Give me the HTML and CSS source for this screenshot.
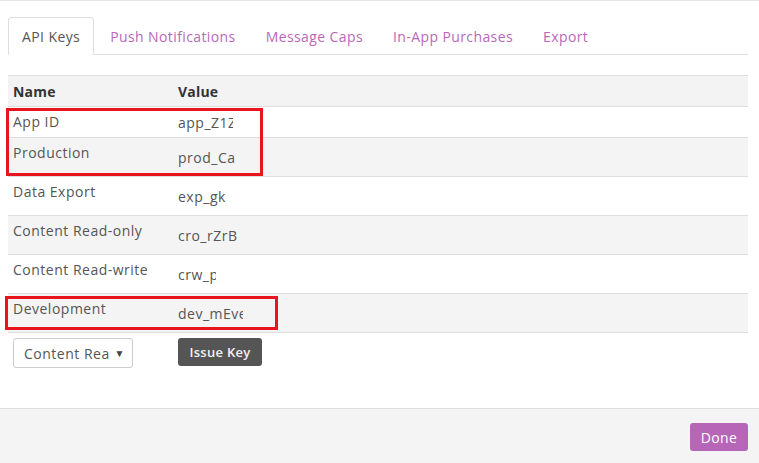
FILE: index.html
```html
<!DOCTYPE html>
<html>
<head>
<meta charset="utf-8">
<link rel="stylesheet" href="styles.css">
</head>
<body>
<div class="page">
  <div class="main">
    <ul class="tabs">
      <li class="tab active">API Keys</li>
      <li class="tab">Push Notifications</li>
      <li class="tab">Message Caps</li>
      <li class="tab">In-App Purchases</li>
      <li class="tab">Export</li>
    </ul>
    <table class="keys">
      <thead>
        <tr><th class="c-name">Name</th><th class="c-val">Value</th></tr>
      </thead>
      <tbody>
        <tr class="short"><td class="c-name">App ID</td><td class="c-val"><span class="val" style="width:55px">app_Z1Z</span></td></tr>
        <tr class="alt"><td class="c-name">Production</td><td class="c-val"><span class="val" style="width:61px">prod_Ca</span></td></tr>
        <tr><td class="c-name">Data Export</td><td class="c-val"><span class="val" style="width:51px">exp_gk</span></td></tr>
        <tr class="alt"><td class="c-name">Content Read-only</td><td class="c-val"><span class="val" style="width:63px">cro_rZrB</span></td></tr>
        <tr><td class="c-name">Content Read-write</td><td class="c-val"><span class="val" style="width:38px">crw_pq</span></td></tr>
        <tr class="alt"><td class="c-name">Development</td><td class="c-val"><span class="val" style="width:65px">dev_mEvex</span></td></tr>
      </tbody>
    </table>
    <div class="controls">
      <div class="select"><span class="select-text">Content Read-only</span><span class="arrow">&#9660;</span></div>
      <button class="issue">Issue Key</button>
    </div>
  </div>
  <div class="footer">
    <button class="done">Done</button>
  </div>
  <div class="mark mark1"></div>
  <div class="mark mark2"></div>
</div>
</body>
</html>
```

FILE: styles.css
```css
* { box-sizing: border-box; }
html, body { margin: 0; padding: 0; background: #fff; }
body {
  font-family: "Open Sans", "Liberation Sans", sans-serif;
  font-size: 14px;
  letter-spacing: 0.5px;
  color: #555;
}
.page {
  position: relative;
  width: 759px;
  height: 463px;
  border-top: 1px solid #e6e6e6;
  display: flex;
  flex-direction: column;
}
.main {
  flex: 1;
  padding: 16px 11px 0 8px;
}
.tabs {
  list-style: none;
  margin: 0;
  padding: 0;
  display: flex;
  border-bottom: 1px solid #ddd;
  height: 38px;
}
.tab {
  height: 38px;
  line-height: 20px;
  padding: 9px 13px 8px;
  margin-right: 2px;
  letter-spacing: 0.4px;
  color: #b968b9;
  border: 1px solid transparent;
  border-radius: 4px 4px 0 0;
}
.tab.active {
  color: #555;
  border-color: #ddd;
  border-bottom-color: #fff;
  background: #fff;
}
.keys {
  margin-top: 20px;
  width: 100%;
  border-collapse: collapse;
  table-layout: fixed;
}
.keys th, .keys td {
  padding: 0 5px;
  text-align: left;
  border-bottom: 1px solid #ddd;
}
.keys .c-name { width: 165px; }
.keys thead th {
  border-top: 1px solid #ddd;
  background: #f3f3f3;
  height: 31px;
  font-weight: 700;
  letter-spacing: 0.2px;
  color: #333;
  vertical-align: middle;
}
.keys tbody td { height: 39px; }
.keys tbody tr.short td { height: 31px; }
.keys tbody tr.alt td { background: #f4f4f4; }
.keys td.c-name {
  vertical-align: top;
  padding-top: 5px;
  line-height: 20px;
}
.keys td.c-val { vertical-align: middle; padding-top: 0; }
.val {
  display: inline-block;
  overflow: hidden;
  white-space: nowrap;
  vertical-align: middle;
  line-height: 20px;
}
.controls {
  display: flex;
  align-items: flex-start;
  gap: 45px;
  padding: 5px 0 0 5px;
}
.select {
  width: 120px;
  height: 30px;
  border: 1px solid #ccc;
  border-radius: 3px;
  display: flex;
  align-items: center;
  padding: 0 7px 0 10px;
  background: #fff;
}
.select-text {
  width: 86px;
  overflow: hidden;
  white-space: nowrap;
  color: #555;
}
.arrow {
  margin-left: auto;
  font-size: 10px;
  color: #444;
}
.issue {
  font-family: inherit;
  width: 84px;
  height: 28px;
  background: #555;
  color: #f2f2f2;
  border: none;
  border-radius: 3px;
  font-size: 13px;
  font-weight: 600;
  letter-spacing: 0.3px;
  padding: 0;
}
.footer {
  height: 55px;
  background: #f4f4f4;
  border-top: 1px solid #ddd;
  display: flex;
  justify-content: flex-end;
  align-items: flex-start;
  padding: 14px 11px 0 0;
}
.done {
  font-family: inherit;
  width: 58px;
  height: 28px;
  background: #b766b7;
  color: #fff;
  border: none;
  border-radius: 3px;
  font-size: 14px;
  letter-spacing: 0.4px;
  padding: 0;
}
.mark {
  position: absolute;
  border: 3px solid #e8141e;
}
.mark1 { left: 6px; top: 107px; width: 257px; height: 68px; }
.mark2 { left: 5px; top: 295px; width: 273px; height: 34px; }
```
